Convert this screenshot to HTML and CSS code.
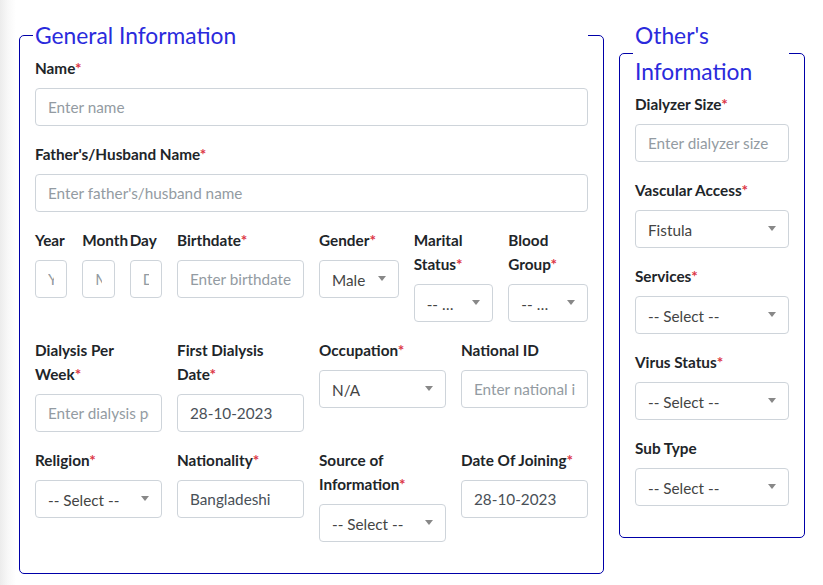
FILE: index.html
```html
<!DOCTYPE html>
<html lang="en">
<head>
<meta charset="utf-8">
<title>Patient Form</title>
<link rel="stylesheet" href="styles.css">
</head>
<body>
<div class="page">
  <fieldset class="box box-main">
    <legend>General Information</legend>
    <div class="grid">
      <div class="field s12">
        <label>Name<span class="req">*</span></label>
        <input class="control" type="text" placeholder="Enter name">
      </div>
    </div>
    <div class="grid">
      <div class="field s12">
        <label>Father's/Husband Name<span class="req">*</span></label>
        <input class="control" type="text" placeholder="Enter father's/husband name">
      </div>
    </div>
    <div class="grid">
      <div class="field s1">
        <label>Year</label>
        <input class="control" type="text" placeholder="Year">
      </div>
      <div class="field s1">
        <label>Month</label>
        <input class="control" type="text" placeholder="Month">
      </div>
      <div class="field s1">
        <label>Day</label>
        <input class="control" type="text" placeholder="Day">
      </div>
      <div class="field s3">
        <label>Birthdate<span class="req">*</span></label>
        <input class="control" type="text" placeholder="Enter birthdate">
      </div>
      <div class="field s2">
        <label>Gender<span class="req">*</span></label>
        <div class="select"><span class="sel-text">Male</span></div>
      </div>
      <div class="field s2">
        <label>Marital Status<span class="req">*</span></label>
        <div class="select"><span class="sel-text">-- Select --</span></div>
      </div>
      <div class="field s2">
        <label>Blood Group<span class="req">*</span></label>
        <div class="select"><span class="sel-text">-- Select --</span></div>
      </div>
    </div>
    <div class="grid">
      <div class="field s3">
        <label>Dialysis Per Week<span class="req">*</span></label>
        <input class="control" type="text" placeholder="Enter dialysis per week">
      </div>
      <div class="field s3">
        <label>First Dialysis Date<span class="req">*</span></label>
        <input class="control" type="text" value="28-10-2023">
      </div>
      <div class="field s3">
        <label>Occupation<span class="req">*</span></label>
        <div class="select"><span class="sel-text">N/A</span></div>
      </div>
      <div class="field s3">
        <label>National ID</label>
        <input class="control" type="text" placeholder="Enter national id">
      </div>
    </div>
    <div class="grid">
      <div class="field s3">
        <label>Religion<span class="req">*</span></label>
        <div class="select"><span class="sel-text">-- Select --</span></div>
      </div>
      <div class="field s3">
        <label>Nationality<span class="req">*</span></label>
        <input class="control" type="text" value="Bangladeshi">
      </div>
      <div class="field s3">
        <label>Source of Information<span class="req">*</span></label>
        <div class="select"><span class="sel-text">-- Select --</span></div>
      </div>
      <div class="field s3">
        <label>Date Of Joining<span class="req">*</span></label>
        <input class="control" type="text" value="28-10-2023">
      </div>
    </div>
  </fieldset>

  <fieldset class="box box-side">
    <legend>Other's Information</legend>
    <div class="field">
      <label>Dialyzer Size<span class="req">*</span></label>
      <input class="control" type="text" placeholder="Enter dialyzer size">
    </div>
    <div class="field">
      <label>Vascular Access<span class="req">*</span></label>
      <div class="select"><span class="sel-text">Fistula</span></div>
    </div>
    <div class="field">
      <label>Services<span class="req">*</span></label>
      <div class="select"><span class="sel-text">-- Select --</span></div>
    </div>
    <div class="field">
      <label>Virus Status<span class="req">*</span></label>
      <div class="select"><span class="sel-text">-- Select --</span></div>
    </div>
    <div class="field">
      <label>Sub Type</label>
      <div class="select"><span class="sel-text">-- Select --</span></div>
    </div>
  </fieldset>
</div>
</body>
</html>
```
FILE: styles.css
```css
* { box-sizing: border-box; }

html, body {
  margin: 0;
  height: 100%;
}

body {
  font-family: "Lato", "Liberation Sans", sans-serif;
  font-size: 15.3px;
  line-height: 24px;
  color: #212529;
  background: linear-gradient(90deg, #ececec 0, #f8f8f8 8px, #ffffff 16px) no-repeat;
  background-color: #fff;
}

.page {
  display: flex;
  align-items: flex-start;
  gap: 15px;
  padding: 17px 0 0 19px;
}

.box {
  margin: 0;
  border: 1px solid #0000a8;
  border-radius: 5px;
  padding: 3px 15px 15px;
  min-width: 0;
}

.box-main { width: 585px; }
.box-side { width: 186px; }

.box legend {
  font-size: 22.8px;
  line-height: 36px;
  font-weight: 400;
  color: #2a2adc;
  padding: 0 0 0 2px;
  margin-left: -2px;
  width: calc(100% + 2px);
}

.grid {
  display: grid;
  grid-template-columns: repeat(12, minmax(0, 1fr));
  column-gap: 15px;
  align-items: start;
}

.s1 { grid-column: span 1; }
.s2 { grid-column: span 2; }
.s3 { grid-column: span 3; }
.s12 { grid-column: span 12; }

.field {
  margin-bottom: 16px;
  min-width: 0;
}

.field label {
  display: block;
  font-weight: 700;
  margin-bottom: 8px;
}

.req { color: #dc3545; }

.control {
  display: block;
  width: 100%;
  height: 38px;
  padding: 6px 12px;
  border: 1px solid #ced4da;
  border-radius: 4px;
  font-family: inherit;
  font-size: 15.3px;
  line-height: 24px;
  color: #495057;
  background: #fff;
  outline: none;
}

.control::placeholder { color: #939ba2; opacity: 1; }

.select {
  position: relative;
  height: 38px;
  border: 1px solid #ced4da;
  border-radius: 4px;
  background: #fff;
  padding: 6px 32px 6px 12px;
  color: #444;
}

.sel-text {
  display: block;
  white-space: nowrap;
  overflow: hidden;
  text-overflow: ellipsis;
  line-height: 26px;
}

.select::after {
  content: "";
  position: absolute;
  right: 12px;
  top: 50%;
  margin-top: -3px;
  border-style: solid;
  border-width: 5px 4px 0 4px;
  border-color: #888 transparent transparent transparent;
}
```
